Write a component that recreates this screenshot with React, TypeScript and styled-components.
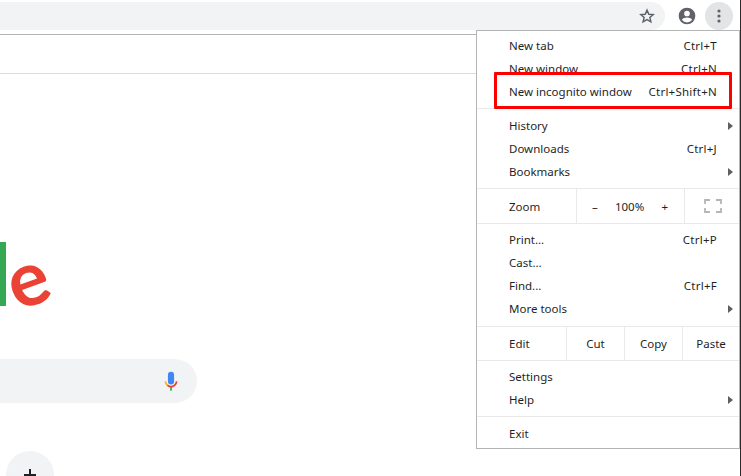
import React from "react";
import styled, { createGlobalStyle } from "styled-components";

const Global = createGlobalStyle`
  html, body { margin: 0; padding: 0; background: #fff; }
  body { font-family: "Noto Sans", "Open Sans", sans-serif; }
`;

const Page = styled.div`
  position: relative;
  width: 741px;
  height: 476px;
  overflow: hidden;
  background: #fff;
  display: flex;
  flex-direction: column;
`;

const Toolbar = styled.header`
  height: 34px;
  flex: none;
  box-sizing: border-box;
  padding: 2px 8px 4px 0;
  display: flex;
  align-items: stretch;
`;

const AddressBar = styled.div`
  width: 665px;
  flex: none;
  background: #f1f3f4;
  border-radius: 0 14px 14px 0;
  display: flex;
  align-items: center;
  justify-content: flex-end;
  padding-right: 10px;
  box-sizing: border-box;
`;

const ToolIcons = styled.div`
  flex: 1;
  display: flex;
  align-items: center;
  justify-content: flex-end;
  gap: 4px;
`;

const RoundButton = styled.div<{ $active?: boolean }>`
  width: 28px;
  height: 28px;
  border-radius: 50%;
  display: flex;
  align-items: center;
  justify-content: center;
  background: ${(p) => (p.$active ? "#e3e4e5" : "transparent")};
`;

const BookmarksBar = styled.div`
  height: 40px;
  flex: none;
  box-sizing: border-box;
  border-top: 1px solid #b3b3b3;
  border-bottom: 1px solid #dcdcdc;
`;

const Content = styled.main`
  flex: 1;
  display: flex;
  flex-direction: column;
  align-items: flex-start;
`;

const Logo = styled.div`
  margin-top: 153px;
  margin-left: -10px;
  height: 92px;
  display: flex;
  align-items: baseline;
  font-family: "Lato", sans-serif;
  font-weight: 700;
  font-size: 86px;
  line-height: 92px;
`;

const LogoL = styled.span`
  color: #34a853;
`;

const LogoE = styled.span`
  display: inline-block;
  color: #ea4335;
  font-size: 76px;
  margin-left: -5px;
  transform: rotate(-20deg);
`;

const SearchBox = styled.div`
  margin-top: 40px;
  width: 197px;
  height: 44px;
  flex: none;
  background: #f1f3f4;
  border-radius: 0 22px 22px 0;
  display: flex;
  align-items: center;
  justify-content: flex-end;
  padding-right: 19px;
  box-sizing: border-box;
`;

const Shortcut = styled.div`
  margin-top: 48px;
  margin-left: 6px;
  width: 48px;
  height: 48px;
  flex: none;
  border-radius: 50%;
  background: #f1f3f4;
  display: flex;
  align-items: center;
  justify-content: center;
`;

const Menu = styled.nav`
  position: absolute;
  left: 476px;
  top: 30px;
  width: 264px;
  height: 419px;
  box-sizing: border-box;
  background: #fff;
  border: 1px solid #b4b4b4;
  font-size: 11.5px;
  color: #1f1f1f;
`;

const Section = styled.div<{ $top: number; $bottom: number }>`
  padding: ${(p) => p.$top}px 0 ${(p) => p.$bottom}px;
  border-bottom: 1px solid #e9e9e9;
  &:last-child { border-bottom: none; }
`;

const Item = styled.div`
  position: relative;
  height: 23px;
  display: flex;
  align-items: center;
  justify-content: space-between;
  padding: 0 22px 0 32px;
`;

const Key = styled.span`
  white-space: pre;
  letter-spacing: 0.25px;
`;

const Arrow = styled.span`
  position: absolute;
  right: 6px;
  top: 8px;
  width: 0;
  height: 0;
  border-left: 5px solid #5f5f5f;
  border-top: 4px solid transparent;
  border-bottom: 4px solid transparent;
`;

const ControlRow = styled.div<{ $height: number }>`
  height: ${(p) => p.$height}px;
  display: flex;
  align-items: stretch;
  border-bottom: 1px solid #e9e9e9;
`;

const RowLabel = styled.div<{ $width: number }>`
  width: ${(p) => p.$width}px;
  flex: none;
  box-sizing: border-box;
  padding-left: 32px;
  display: flex;
  align-items: center;
`;

const Cell = styled.div<{ $width: number }>`
  width: ${(p) => p.$width}px;
  flex: none;
  box-sizing: border-box;
  border-left: 1px solid #e9e9e9;
  display: flex;
  align-items: center;
  justify-content: center;
`;

const ZoomControls = styled.div`
  width: 108px;
  flex: none;
  box-sizing: border-box;
  border-left: 1px solid #e9e9e9;
  display: flex;
  align-items: center;
  justify-content: space-between;
  padding: 0 16px 0 15px;
`;

const Highlight = styled.div`
  position: absolute;
  left: 494px;
  top: 72px;
  width: 238px;
  height: 37px;
  box-sizing: border-box;
  border: 3px solid #f00;
  border-radius: 1px;
`;

const EdgeLine = styled.div`
  position: absolute;
  right: 0;
  top: 0;
  width: 1px;
  height: 476px;
  background: #2a2a2a;
`;

const items = (rows: [string, string?, boolean?][]) =>
  rows.map(([label, key, arrow]) => (
    <Item key={label}>
      <span>{label}</span>
      {key && <Key>{key}</Key>}
      {arrow && <Arrow />}
    </Item>
  ));

const StarIcon = () => (
  <svg width="16" height="16" viewBox="0 0 24 24" fill="none" stroke="#5f6368" strokeWidth="2.2" strokeLinejoin="miter">
    <path d="M12 3.2l2.7 6.1 6.6.6-5 4.4 1.5 6.5L12 17.4l-5.8 3.4 1.5-6.5-5-4.4 6.6-.6z" />
  </svg>
);

const AccountIcon = () => (
  <svg width="20" height="20" viewBox="0 0 24 24" fill="#5f6368">
    <path d="M12 2a10 10 0 1 0 0 20 10 10 0 0 0 0-20zm0 3.6a3.4 3.4 0 1 1 0 6.8 3.4 3.4 0 0 1 0-6.8zm0 14.2a7.7 7.7 0 0 1-6.2-3.2c1.2-1.9 4-2.9 6.2-2.9s5 1 6.2 2.9a7.7 7.7 0 0 1-6.2 3.2z" />
  </svg>
);

const DotsIcon = () => (
  <svg width="16" height="16" viewBox="0 0 16 16" fill="#5f6368">
    <circle cx="8" cy="3" r="1.6" />
    <circle cx="8" cy="8" r="1.6" />
    <circle cx="8" cy="13" r="1.6" />
  </svg>
);

const MicIcon = () => (
  <svg width="14" height="20" viewBox="0 0 16 22" fill="none">
    <rect x="4.5" y="0.5" width="7" height="14.5" rx="3.5" fill="#4285f4" />
    <path d="M1.5 11.5a6.5 6.5 0 0 0 2.4 4.4" stroke="#fbbc05" strokeWidth="2" />
    <path d="M3.9 15.9a6.5 6.5 0 0 0 8.2 0 6.5 6.5 0 0 0 2.4-4.4" stroke="#ea4335" strokeWidth="2" />
    <rect x="7" y="18" width="2" height="4" fill="#34a853" />
  </svg>
);

const FullscreenIcon = () => (
  <svg width="18" height="14" viewBox="0 0 18 14" fill="none" stroke="#b5b5b5" strokeWidth="1.8">
    <path d="M1 5V1h5M12 1h5v4M17 9v4h-5M6 13H1V9" />
  </svg>
);

const PlusIcon = () => (
  <svg width="14" height="14" viewBox="0 0 14 14" fill="#202124">
    <rect x="6" y="1" width="2" height="12" />
    <rect x="1" y="6" width="12" height="2" />
  </svg>
);

export default function App() {
  return (
    <Page>
      <Global />
      <Toolbar>
        <AddressBar>
          <StarIcon />
        </AddressBar>
        <ToolIcons>
          <RoundButton>
            <AccountIcon />
          </RoundButton>
          <RoundButton $active>
            <DotsIcon />
          </RoundButton>
        </ToolIcons>
      </Toolbar>
      <BookmarksBar />
      <Content>
        <Logo>
          <LogoL>l</LogoL>
          <LogoE>e</LogoE>
        </Logo>
        <SearchBox>
          <MicIcon />
        </SearchBox>
        <Shortcut>
          <PlusIcon />
        </Shortcut>
      </Content>
      <Menu>
        <Section $top={3} $bottom={5}>
          {items([["New tab", "Ctrl+T"], ["New window", "Ctrl+N"], ["New incognito window", "Ctrl+Shift+N"]])}
        </Section>
        <Section $top={5} $bottom={5}>
          {items([["History", undefined, true], ["Downloads", "Ctrl+J"], ["Bookmarks", undefined, true]])}
        </Section>
        <ControlRow $height={34}>
          <RowLabel $width={99}>Zoom</RowLabel>
          <ZoomControls>
            <span>–</span>
            <span>100%</span>
            <span>+</span>
          </ZoomControls>
          <Cell $width={56}>
            <FullscreenIcon />
          </Cell>
        </ControlRow>
        <Section $top={4} $bottom={6}>
          {items([["Print...", "Ctrl+P"], ["Cast..."], ["Find...", "Ctrl+F"], ["More tools", undefined, true]])}
        </Section>
        <ControlRow $height={33}>
          <RowLabel $width={89}>Edit</RowLabel>
          <Cell $width={58}>Cut</Cell>
          <Cell $width={58}>Copy</Cell>
          <Cell $width={57}>Paste</Cell>
        </ControlRow>
        <Section $top={4} $bottom={5}>
          {items([["Settings"], ["Help", undefined, true]])}
        </Section>
        <Section $top={5} $bottom={3}>
          {items([["Exit"]])}
        </Section>
      </Menu>
      <Highlight />
      <EdgeLine />
    </Page>
  );
}
